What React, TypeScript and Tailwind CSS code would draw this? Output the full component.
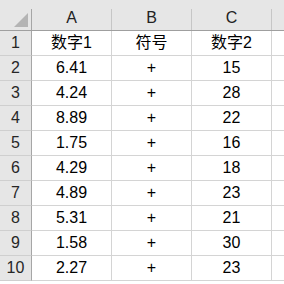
import React from 'react';

const ROWS: [string, string, string][] = [
  ['数字1', '符号', '数字2'],
  ['6.41', '+', '15'],
  ['4.24', '+', '28'],
  ['8.89', '+', '22'],
  ['1.75', '+', '16'],
  ['4.29', '+', '18'],
  ['4.89', '+', '23'],
  ['5.31', '+', '21'],
  ['1.58', '+', '30'],
  ['2.27', '+', '23'],
];

const COLS = ['A', 'B', 'C'];

function HeaderSep({ dark }: { dark?: boolean }) {
  return <div className={`w-px mt-[9px] h-[21px] ${dark ? 'bg-[#a6a6a6]' : 'bg-[#c6c6c6]'}`} />;
}

export default function App() {
  return (
    <div className="w-[284px] h-[284px] overflow-hidden bg-white font-['Liberation_Sans','Noto_Sans_CJK_SC',sans-serif] text-[16px] leading-none">
      {/* column headers */}
      <div className="flex h-[31px] bg-[#e6e6e6] border-b border-[#9f9f9f]">
        <div className="w-[31px] shrink-0 flex items-end justify-end pr-[3px] pb-[3px]">
          <svg width="14" height="14" viewBox="0 0 14 14">
            <polygon points="14,0 14,14 0,14" fill="#b4b4b4" />
          </svg>
        </div>
        <HeaderSep dark />
        {COLS.map((c) => (
          <React.Fragment key={c}>
            <div className="w-[79px] shrink-0 flex items-center justify-center pt-[6px] text-[#222]">{c}</div>
            <HeaderSep />
          </React.Fragment>
        ))}
        <div className="flex-1" />
      </div>

      {/* rows */}
      {ROWS.map((r, i) => (
        <div key={i} className="flex h-[25px]">
          <div className="w-[32px] shrink-0 bg-[#e6e6e6] border-r border-r-[#a6a6a6] border-b border-b-[#cfcfcf] flex items-center justify-center text-[#262626]">
            {i + 1}
          </div>
          {r.map((v, j) => (
            <div
              key={j}
              className="w-[80px] shrink-0 border-r border-b border-[#d4d4d4] flex items-center justify-center text-black"
            >
              {v}
            </div>
          ))}
          <div className="flex-1 border-b border-[#d4d4d4]" />
        </div>
      ))}
    </div>
  );
}
